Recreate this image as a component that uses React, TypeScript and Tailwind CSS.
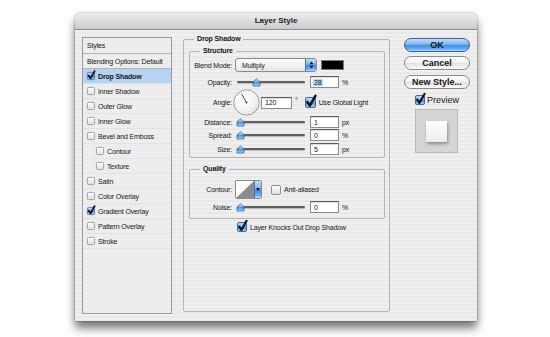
const Box = ({ on, s = 8 }: { on?: boolean; s?: number }) => (
  <svg width={s} height={s} viewBox="0 0 10 10" className="shrink-0 overflow-visible">
    <rect x="0.5" y="0.5" width="9" height="9" rx="1.5" fill={on ? 'url(#aqua)' : 'url(#boxg)'} stroke={on ? '#46679c' : '#8e8e8e'} />
    {on && (
      <path d="M2.2 4.6 L4.4 7.9 L9.6 -1.2" fill="none" stroke="#0d0d0d" strokeWidth="2.1" strokeLinecap="round" strokeLinejoin="round" />
    )}
  </svg>
);

const Defs = () => (
  <svg width="0" height="0" className="absolute">
    <defs>
      <linearGradient id="aqua" x1="0" y1="0" x2="0" y2="1">
        <stop offset="0" stopColor="#c9e3fb" />
        <stop offset="0.48" stopColor="#6eb0f0" />
        <stop offset="0.52" stopColor="#3f8de4" />
        <stop offset="1" stopColor="#aee0ff" />
      </linearGradient>
      <linearGradient id="boxg" x1="0" y1="0" x2="0" y2="1">
        <stop offset="0" stopColor="#ffffff" />
        <stop offset="1" stopColor="#dedede" />
      </linearGradient>
      <radialGradient id="dialg" cx="0.4" cy="0.35" r="0.7">
        <stop offset="0" stopColor="#ffffff" />
        <stop offset="0.7" stopColor="#f1f1f1" />
        <stop offset="1" stopColor="#d2d2d2" />
      </radialGradient>
    </defs>
  </svg>
);

const Label = ({ children }: { children: React.ReactNode }) => (
  <div className="w-[42px] shrink-0 text-right">{children}</div>
);

const Slider = ({ pos }: { pos: number }) => (
  <div className="relative ml-[5px] h-[12px] w-[68px] shrink-0">
    <div className="absolute left-0 right-0 top-[5px] h-[2px] rounded-full bg-[#5f5f5f] shadow-[0_1px_0_#bdbdbd]" />
    <svg className="absolute top-[2px]" style={{ left: pos - 4 }} width="9" height="9" viewBox="0 0 9 9">
      <path d="M1 8 L1 4.2 L4.5 0.8 L8 4.2 L8 8 Z" fill="url(#aqua)" stroke="#3d5f95" strokeWidth="0.8" strokeLinejoin="round" />
    </svg>
  </div>
);

const Field = ({ value, unit, sel }: { value: string; unit?: string; sel?: boolean }) => (
  <>
    <div className="ml-[5px] flex h-[12px] w-[29px] shrink-0 items-center border border-[#8c8c8c] border-t-[#5e5e5e] bg-white pl-[2px] shadow-[inset_0_1px_1px_rgba(0,0,0,0.15)]">
      <span className={sel ? 'bg-[#b5d3f7] px-[1px]' : 'px-[1px]'}>{value}</span>
    </div>
    {unit && <span className="ml-[3px]">{unit}</span>}
  </>
);

const items: { name: string; on?: boolean; sub?: boolean; active?: boolean }[] = [
  { name: 'Drop Shadow', on: true, active: true },
  { name: 'Inner Shadow' },
  { name: 'Outer Glow' },
  { name: 'Inner Glow' },
  { name: 'Bevel and Emboss' },
  { name: 'Contour', sub: true },
  { name: 'Texture', sub: true },
  { name: 'Satin' },
  { name: 'Color Overlay' },
  { name: 'Gradient Overlay', on: true },
  { name: 'Pattern Overlay' },
  { name: 'Stroke' },
];

const Button = ({ children, primary, className = '' }: { children: React.ReactNode; primary?: boolean; className?: string }) => (
  <div
    className={`flex h-[14px] items-center justify-center rounded-full border text-[9px] font-bold tracking-normal ${
      primary
        ? 'border-[#3f5f97] bg-[image:linear-gradient(180deg,#c3def9_0%,#7ab4f1_45%,#3f8de5_52%,#69b0f7_85%,#b2e3ff_100%)]'
        : 'border-[#8a8a8a] bg-[image:linear-gradient(180deg,#ffffff_0%,#f3f3f3_45%,#e3e3e3_52%,#f1f1f1_85%,#ffffff_100%)]'
    } ${className}`}
  >
    {children}
  </div>
);

export default function App() {
  return (
    <div className="h-[337px] w-[550px] bg-white pl-[75px] pt-[13px] font-['Liberation_Sans',Arial,sans-serif] text-[7px] leading-none tracking-[-0.15px] whitespace-nowrap text-[#161616]">
      <Defs />
      <div className="flex h-[308px] w-[402px] flex-col rounded-t-[5px] shadow-[0_7px_10px_rgba(0,0,0,0.55),0_0_2px_rgba(0,0,0,0.45)]">
        <div className="flex h-[17px] shrink-0 items-center justify-center rounded-t-[5px] border-b border-[#8f8f8f] bg-gradient-to-b from-[#ededed] to-[#cbcbcb] text-[8px] font-bold tracking-normal text-[#222]">
          Layer Style
        </div>
        <div className="flex flex-1 bg-[image:repeating-linear-gradient(180deg,#efefef_0px,#efefef_2px,#e9e9e9_2px,#e9e9e9_4px)]">
          {/* styles list */}
          <div className="ml-[7px] mt-[7px] h-[277px] w-[90px] shrink-0 border border-[#9a9a9a] bg-[#ededed]">
            <div className="flex h-[16px] items-center border-b border-[#b3b3b3] pl-[4px]">Styles</div>
            <div className="flex h-[15px] items-center border-b border-[#b3b3b3] pl-[4px]">Blending Options: Default</div>
            {items.map((it) => (
              <div
                key={it.name}
                className={`flex h-[15px] items-center border-b border-[#e2e2e2] ${it.sub ? 'pl-[13px]' : 'pl-[4px]'} ${
                  it.active ? 'bg-[#b7d3f4] font-bold' : ''
                }`}
              >
                <Box on={it.on} />
                <span className="ml-[3px]">{it.name}</span>
              </div>
            ))}
          </div>

          {/* main */}
          <fieldset className="ml-[11px] mt-[4px] h-[278px] w-[207px] shrink-0 rounded-[2px] border border-[#b5b5b5]">
            <legend className="ml-[10px] px-[3px] font-bold leading-[10px]">Drop Shadow</legend>
            <fieldset className="ml-[5px] mr-[4px] mt-[2px] rounded-[2px] border border-[#b5b5b5] pb-[2px]">
              <legend className="ml-[10px] px-[3px] font-bold leading-[10px]">Structure</legend>
              <div className="mt-[2px] flex h-[14px] items-center">
                <Label>Blend Mode:</Label>
                <div className="ml-[3px] flex h-[14px] w-[82px] items-center overflow-hidden rounded-[3px] border border-[#8a8a8a] bg-gradient-to-b from-white to-[#e6e6e6]">
                  <span className="flex-1 pl-[6px]">Multiply</span>
                  <div className="flex h-full w-[11px] items-center justify-center border-l border-[#4f6f9f] bg-[image:linear-gradient(180deg,#c3def9_0%,#7ab4f1_45%,#3f8de5_52%,#69b0f7_85%,#b2e3ff_100%)]">
                    <svg width="5" height="8" viewBox="0 0 5 8">
                      <path d="M0.5 3.2 L2.5 0.6 L4.5 3.2 Z M0.5 4.8 L2.5 7.4 L4.5 4.8 Z" fill="#111" />
                    </svg>
                  </div>
                </div>
                <div className="ml-[4px] h-[10px] w-[23px] border border-[#7a7a7a] bg-black" />
              </div>
              <div className="mt-[4px] flex h-[12px] items-center">
                <Label>Opacity:</Label>
                <Slider pos={19} />
                <Field value="28" unit="%" sel />
              </div>
              <div className="mt-[1px] flex h-[27px] items-center">
                <Label>Angle:</Label>
                <svg className="ml-[1px] shrink-0" width="27" height="27" viewBox="0 0 27 27">
                  <circle cx="13.5" cy="13.5" r="12.6" fill="url(#dialg)" stroke="#8d8d8d" strokeWidth="0.9" />
                  <circle cx="13.5" cy="13.5" r="11.6" fill="none" stroke="#ffffff" strokeWidth="0.6" />
                  <line x1="13.5" y1="13.5" x2="8.7" y2="5.2" stroke="#333" strokeWidth="0.9" />
                  <circle cx="13.5" cy="13.5" r="0.9" fill="#333" />
                </svg>
                <div className="ml-[1px] flex h-[12px] w-[31px] shrink-0 items-center border border-[#8c8c8c] border-t-[#5e5e5e] bg-white pl-[3px] shadow-[inset_0_1px_1px_rgba(0,0,0,0.15)]">
                  120
                </div>
                <span className="ml-[3px] self-start pt-[8px]">°</span>
                <div className="ml-[7px] flex items-center">
                  <Box on s={11} />
                  <span className="ml-[3px]">Use Global Light</span>
                </div>
              </div>
              <div className="flex h-[12px] items-center">
                <Label>Distance:</Label>
                <Slider pos={3} />
                <Field value="1" unit="px" />
              </div>
              <div className="mt-[1px] flex h-[12px] items-center">
                <Label>Spread:</Label>
                <Slider pos={3} />
                <Field value="0" unit="%" />
              </div>
              <div className="mt-[2px] flex h-[12px] items-center">
                <Label>Size:</Label>
                <Slider pos={3} />
                <Field value="5" unit="px" />
              </div>
            </fieldset>

            <fieldset className="ml-[5px] mr-[4px] mt-[6px] rounded-[2px] border border-[#b5b5b5] pb-[5px]">
              <legend className="ml-[10px] px-[3px] font-bold leading-[10px]">Quality</legend>
              <div className="mt-[6px] flex h-[19px] items-center">
                <Label>Contour:</Label>
                <div className="ml-[3px] flex h-[19px] w-[27px] shrink-0 overflow-hidden rounded-[2px] border border-[#8a8a8a]">
                  <svg width="18" height="17" viewBox="0 0 18 17" className="shrink-0 bg-white">
                    <path d="M0 17 L18 0 L18 17 Z" fill="#8c8c8c" />
                  </svg>
                  <div className="flex flex-1 items-center justify-center border-l border-[#4f6f9f] bg-[image:linear-gradient(180deg,#c3def9_0%,#7ab4f1_45%,#3f8de5_52%,#69b0f7_85%,#b2e3ff_100%)]">
                    <svg width="4" height="3" viewBox="0 0 4 3">
                      <path d="M0 0 L4 0 L2 3 Z" fill="#111" />
                    </svg>
                  </div>
                </div>
                <div className="ml-[9px] flex items-center">
                  <Box s={10} />
                  <span className="ml-[3px]">Anti-aliased</span>
                </div>
              </div>
              <div className="mt-[2px] flex h-[12px] items-center">
                <Label>Noise:</Label>
                <Slider pos={3} />
                <Field value="0" unit="%" />
              </div>
            </fieldset>

            <div className="ml-[53px] mt-[3px] flex h-[10px] items-center">
              <Box on s={10} />
              <span className="ml-[3px]">Layer Knocks Out Drop Shadow</span>
            </div>
          </fieldset>

          {/* buttons */}
          <div className="ml-[14px] mt-[8px] flex w-[66px] shrink-0 flex-col">
            <Button primary>OK</Button>
            <Button className="mt-[4px]">Cancel</Button>
            <Button className="mt-[5px]">New Style...</Button>
            <div className="ml-[11px] mt-[6px] flex h-[10px] items-center">
              <Box on s={10} />
              <span className="ml-[2px] text-[9px] tracking-normal">Preview</span>
            </div>
            <div className="ml-[11px] mt-[4px] flex h-[44px] w-[43px] items-center justify-center border border-[#b9b9b9] bg-[#d5d5d5]">
              <div className="h-[21px] w-[21px] bg-gradient-to-b from-white to-[#ececec] shadow-[1px_2px_3px_rgba(0,0,0,0.35)]" />
            </div>
          </div>
        </div>
      </div>
    </div>
  );
}
